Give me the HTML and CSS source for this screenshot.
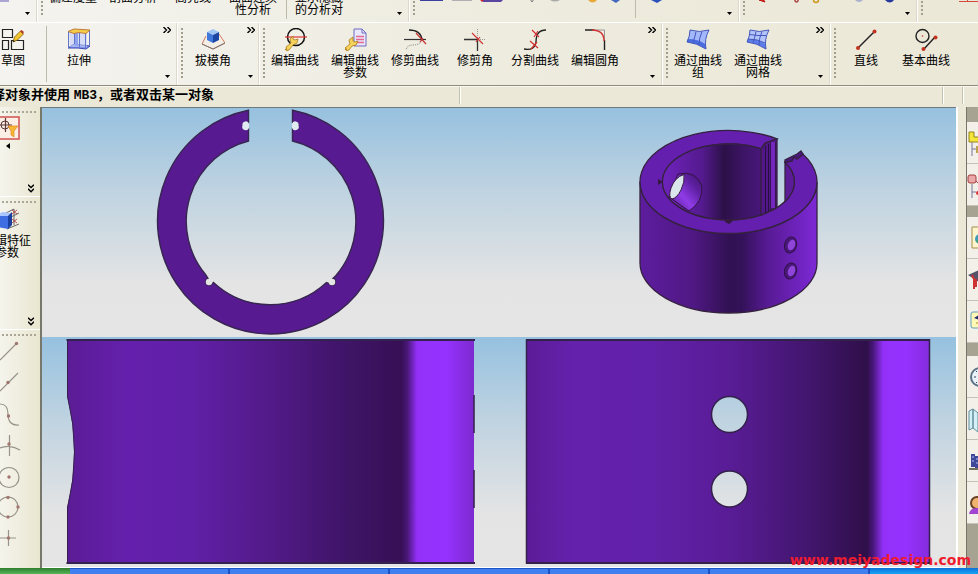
FILE: index.html
```html
<!DOCTYPE html>
<html lang="zh-CN">
<head>
<meta charset="utf-8">
<title>CAD</title>
<link rel="stylesheet" href="styles.css">
</head>
<body>
<svg class="defs" aria-hidden="true">
  <symbol id="more" viewBox="0 0 8 6"><path d="M.5 0 3.500 3 .5 6M4.500 0l3 3-3 3" fill="none" stroke="#000" stroke-width="1.400"/></symbol>
  <symbol id="down" viewBox="0 0 6 9"><path d="M0 .7 3 3.500 6 .7M0 4.700l3 3 3-3" fill="none" stroke="#000" stroke-width="1.500"/></symbol>
  <symbol id="caret" viewBox="0 0 5 3"><path d="M0 0h5L2.500 3z"/></symbol>
</svg>

<header class="toolbars">
  <div class="row row-top">
    <div class="group g-a first">
      <span class="stub"></span>
      <span class="end"><svg class="more"><use href="#more"/></svg><svg class="caret"><use href="#caret"/></svg></span>
    </div>
    <div class="group g-b">
      <i class="grip"></i>
      <button class="tool">偏差度量</button>
      <button class="tool">剖面分析</button>
      <button class="tool">高亮线</button>
      <button class="tool">曲面连续<br>性分析</button>
      <i class="sep"></i>
      <button class="tool">显示隐藏<br>的分析对</button>
      <span class="end"><svg class="more"><use href="#more"/></svg><svg class="caret"><use href="#caret"/></svg></span>
    </div>
    <div class="group g-c">
      <i class="grip"></i>
      <svg class="strip" width="300" height="22" viewBox="415 0 300 22">
        <path d="M420 0h23v1h-23z" fill="#3b3fa0"/><path d="M452 0h20v1h-20z" fill="#b0aeb0"/>
        <path d="M481 0h22l-2 2h-18z" fill="#5a45a0"/><circle cx="482" cy="0" r="1.500" fill="#c22"/>
        <path d="m530-1 2 3 2-3" fill="none" stroke="#777"/><path d="M550 0q5 3 10 0" fill="#aaa"/>
        <path d="M588 0q5 5 9 0" fill="#e9a93a"/><path d="m611 0 5 3 4-3" fill="#4467c0"/>
        <path d="M635.500 0v18" stroke="#bdbaa9"/><path d="m651 0 6 3 5-3" fill="#2a50bb"/>
      </svg>
      <span class="end"><svg class="more"><use href="#more"/></svg><svg class="caret"><use href="#caret"/></svg></span>
    </div>
    <div class="group g-d">
      <i class="grip"></i>
      <svg class="strip" width="150" height="22" viewBox="745 0 150 22">
        <path d="m759 0 4-1 2 3z" fill="#d22" stroke="#b11"/><path d="M795-1v2q2 2 3 0v-2" fill="none" stroke="#a44" stroke-width="1.500"/>
        <circle cx="816" cy="0" r="2.500" fill="none" stroke="#cc9a22" stroke-width="1.500"/><path d="M855 0q4 4 8 0" fill="#aab0d0"/>
        <path d="M885 0q5 5 9 0" fill="#26389c"/>
      </svg>
      <span class="end"><svg class="more"><use href="#more"/></svg><svg class="caret"><use href="#caret"/></svg></span>
    </div>
    <div class="group g-e">
      <i class="grip"></i>
      <svg class="strip" width="55" height="22" viewBox="923 0 55 22"><path d="M959 1.500h19M967.500-2v3" fill="none" stroke="#d24a3c"/></svg>
    </div>
  </div>

  <div class="row">
    <div class="group h-a first">
      <button class="tool cut">
        <svg class="icon" viewBox="0 0 24 24"><g fill="none" stroke="#222" stroke-width="1.200"><path d="M1.500 1.500h10v8h-10zM1.500 12.500h6v9h-6zM10.500 12.500v9h12v-9zM10.500 12.500h12"/></g><path d="m12 14 1.500-5 6-6 3 3-6 6z" fill="#f3c52c" stroke="#7a5a14" stroke-width=".8"/><path d="m19 3 1.500-1 2.500 2-1.500 2z" fill="#b53a2a"/><path d="m12 14 .6-2 1.400 1.300z" fill="#111"/></svg>
        草图</button>
      <i class="sep"></i>
      <button class="tool">
        <svg class="icon" viewBox="0 0 24 24"><path d="M1 20 7 16l16 2-4 3-8-1z" fill="#8296ee" stroke="#3947b3"/><path d="M2 3h18v16H3z" fill="#c3cefa" opacity=".6"/><path d="M8 4h3v14H8z" fill="#8fa3ee"/><path d="M1.500 4v16M7.500 5v11M12.500 5v14M22.500 3v15M18.500 5v16" fill="none" stroke="#6275c8"/><path d="M1 3.500 7 1l16 1-4 3.500-7-1-5 1z" fill="#f5ce49" stroke="#c17b38"/></svg>
        拉伸</button>
      <span class="end"><svg class="more"><use href="#more"/></svg><svg class="caret"><use href="#caret"/></svg></span>
    </div>
    <div class="group h-b">
      <i class="grip"></i>
      <button class="tool">
        <svg class="icon" viewBox="0 0 24 24"><path d="M5 8 1 16l11 5 12-6-6-9" fill="#f3efe6" stroke="#d0765c"/><path d="m1 16 11 5 12-6" fill="none" stroke="#777"/><path d="m6 4 6-3 6 3-6 3z" fill="#9fc6f4"/><path d="m6 4 6 3v8l-6-3z" fill="#3f78da"/><path d="m18 4-6 3v8l6-3z" fill="#1d45a4"/></svg>
        拔模角</button>
      <span class="end"><svg class="more"><use href="#more"/></svg><svg class="caret"><use href="#caret"/></svg></span>
    </div>
    <div class="group h-c">
      <i class="grip"></i>
      <button class="tool">
        <svg class="icon" viewBox="0 0 24 24"><circle cx="13" cy="9" r="8.500" fill="none" stroke="#111" stroke-width="1.500"/><path d="M2 9h22" stroke="#d33" stroke-width="1.200"/><path d="m3 19 5-4-1-4 3-3v3l2 1 3-1-1 4-4 2-4 5q-3 2-4-1l2 .5z" fill="#f6d35c" stroke="#a97a1a" stroke-width=".8"/></svg>
        编辑曲线</button>
      <button class="tool">
        <svg class="icon" viewBox="0 0 24 24"><path d="M11 1h8l4 4v13H11z" fill="#e9e8ff" stroke="#6e6cc0"/><path d="M19 1v4h4" fill="none" stroke="#6e6cc0"/><path d="M13 8.500h8M13 11.500h8M13 14.500h8" stroke="#e46a8e" stroke-width="1.500"/><path d="m2 20 5-4-1-4 4-3v4l2 1 3-1-2 4-4 1-3 4q-3 2-4-1l2 .5z" fill="#f6d35c" stroke="#a97a1a" stroke-width=".8"/></svg>
        编辑曲线<br>参数</button>
      <button class="tool">
        <svg class="icon" viewBox="0 0 24 24"><path d="M6 2q12 0 13 10" fill="none" stroke="#222" stroke-width="1.400"/><path d="M19 12q-2 5-9 5-6 0-7 5" fill="none" stroke="#777" stroke-dasharray="1 1"/><path d="M1 11.500h22" stroke="#333" stroke-width="1.200"/><path d="m13 5 10 11M20 10l-3 4" stroke="#c93434" stroke-width="1.200"/></svg>
        修剪曲线</button>
      <button class="tool">
        <svg class="icon" viewBox="0 0 24 24"><path d="M1 11.500h14M14.500 11v12" stroke="#333" stroke-width="1.300"/><path d="M14.500 1v10M15 11.500h8" stroke="#999" stroke-dasharray="1 1"/><path d="m9 5 11 11M17 9l-4 5" stroke="#d03838" stroke-width="1.200"/></svg>
        修剪角</button>
      <button class="tool">
        <svg class="icon" viewBox="0 0 24 24"><path d="M1 21q11 2 12-7 0-12 10-12" fill="none" stroke="#222" stroke-width="1.300"/><path d="m9 2 7 7M15 3l-4 6M7 13l8 7M14 14l-6 7" stroke="#d13232" stroke-width="1.200"/></svg>
        分割曲线</button>
      <button class="tool">
        <svg class="icon" viewBox="0 0 24 24"><path d="M2 2h9M21.500 12v10" stroke="#222" stroke-width="1.400"/><path d="M11 2h10.500v10" fill="none" stroke="#999"/><path d="M9 2q12 0 12 11" fill="none" stroke="#d23636" stroke-width="1.400"/></svg>
        编辑圆角</button>
      <span class="end"><svg class="more"><use href="#more"/></svg><svg class="caret"><use href="#caret"/></svg></span>
    </div>
    <div class="group h-d">
      <i class="grip"></i>
      <button class="tool">
        <svg class="icon" viewBox="0 0 24 24"><path d="M4 2Q13 5 23 2 18 11 20 21 11 15 1 14 4 8 4 2Z" fill="#a3b8fa"/><path d="M2 11Q12 11 19 16L20 21Q11 15 1 14Z" fill="#496ce0"/><path d="M4 2Q13 5 23 2 18 11 20 21 11 15 1 14 4 8 4 2ZM10 3.500Q9 9 7 14.500M16 3.500Q13 10 13 17" fill="none" stroke="#4458bc"/></svg>
        通过曲线<br>组</button>
      <button class="tool">
        <svg class="icon" viewBox="0 0 24 24"><path d="M4 2Q13 5 23 2 18 11 20 21 11 15 1 14 4 8 4 2Z" fill="#b3c4fb"/><path d="M2 11Q12 11 19 16L20 21Q11 15 1 14Z" fill="#5c7cea"/><path d="M4 2Q13 5 23 2 18 11 20 21 11 15 1 14 4 8 4 2ZM10 3.500Q9 9 7 14.500M16 3.500Q13 10 13 17M3.500 6.500Q12 8 20 7.500M2 11Q12 11 19 15" fill="none" stroke="#4458bc"/></svg>
        通过曲线<br>网格</button>
      <span class="end"><svg class="more"><use href="#more"/></svg><svg class="caret"><use href="#caret"/></svg></span>
    </div>
    <div class="group h-e">
      <i class="grip"></i>
      <button class="tool">
        <svg class="icon" viewBox="0 0 24 24"><path d="M4 20 20 4" stroke="#222" stroke-width="1.400"/><circle cx="4" cy="20" r="2" fill="#c2321e"/><circle cx="20.500" cy="3.500" r="2" fill="#c2321e"/></svg>
        直线</button>
      <button class="tool">
        <svg class="icon" viewBox="0 0 24 24"><circle cx="8.500" cy="8" r="6.500" fill="none" stroke="#222" stroke-width="1.400"/><circle cx="8.500" cy="8" r=".8" fill="#c33"/><path d="m10 21 11-12" stroke="#222" stroke-width="1.400"/><circle cx="9.500" cy="21" r="2" fill="#c2321e"/><circle cx="21.500" cy="9.500" r="2" fill="#c2321e"/></svg>
        基本曲线</button>
    </div>
  </div>
</header>

<div class="status"><p>择对象并使用 <b>MB3</b>，或者双击某一对象</p><span class="cell c1"></span><span class="cell c2"></span><span class="cell c3"></span></div>

<main class="work">
  <aside class="side">
    <section class="panel p1">
      <i class="hgrip"></i>
      <svg width="24" height="44" viewBox="0 0 24 44"><rect x="-3" y="2" width="22" height="22" fill="#fbeee4" stroke="#d05252" stroke-width="1.500"/><circle cx="5" cy="10" r="4" fill="none" stroke="#5c3434"/><path d="M-1 10h13M5.500 3v14" stroke="#5c3434" stroke-width="1.200"/><path d="M8 11h10l-4 5v6l-3-2v-4z" fill="#f8b632" stroke="#e08a28" stroke-width=".7"/><path d="m6 31 4-3v6z"/></svg>
      <svg class="down"><use href="#down"/></svg>
    </section>
    <section class="panel p2">
      <i class="hgrip"></i>
      <button class="tool side-tool">
        <svg class="icon" viewBox="0 0 24 24"><path d="m7 8 12-6M12 12l12-6M12 22l12-5M19 2v16" fill="none" stroke="#666"/><path d="m17 3 5 4M22 3l-5 4M17 12l5 4M22 12l-5 4" stroke="#a33" stroke-width=".8"/><path d="m2 9 5-4 10 1-4 4z" fill="#a8c8ff"/><path d="M2 9h11v13L2 20z" fill="#3e6ee2"/><path d="m13 9 4-4v13l-4 4z" fill="#1b3f9e"/></svg>
        编辑特征<br>参数</button>
      <svg class="down"><use href="#down"/></svg>
    </section>
    <section class="panel p3">
      <i class="hgrip"></i>
      <svg width="22" height="214" viewBox="0 338 22 214" fill="none" stroke="#97938a" stroke-width="1.200"><path d="m0 360 16-16M0 391l18-18M0 404q8 0 8 10 0 12 11 11M0 448q10-4 20 2M9.500 435v21M0 538h16M8.500 530v16"/><circle cx="9" cy="477.500" r="10"/><circle cx="8" cy="507" r="10"/><g fill="#a0766e" stroke="none"><circle cx="16.500" cy="343.500" r="1.700"/><circle cx="8" cy="382.500" r="1.700"/><circle cx="8.500" cy="416" r="1.700"/><circle cx="9" cy="444" r="1.700"/><circle cx="9" cy="477" r="1.700"/><circle cx="8" cy="497.500" r="1.700"/><circle cx="18" cy="507" r="1.700"/><circle cx="8" cy="517" r="1.700"/><circle cx="8.500" cy="538" r="1.700"/></g></svg>
    </section>
  </aside>

  <div class="views">
    <svg class="view" viewBox="42 108 457 229" preserveAspectRatio="xMidYMid meet">
      <path d="M248.500 110.200A113 113 0 1 0 292.500 110.200V122.500H295A3 3 0 1 1 295 128.500H292.500V141A83 83 0 0 1 336 275.500L333 278.500A3.500 3.500 0 1 1 329 283.500L326.500 282.500A83 83 0 0 1 213.500 282.500L212 284A3.500 3.500 0 1 1 208 278.500L205.500 274.500A83 83 0 0 1 248.500 141V128.500H247A3 3 0 1 1 247 122.500H248.500Z" fill="#571a90" stroke="#372650" stroke-width="1.400"/>
      <path d="M242.500 125.500a3 3 0 0 1 6.500-1.500v4a3 3 0 0 1-6.500-2.500M298.500 125.500a3 3 0 0 0-6.500-1.500v4a3 3 0 0 0 6.500-2.500" fill="#dfeaf1"/>
      <circle cx="209" cy="282" r="3.200" fill="#e4e4e4"/><circle cx="332" cy="282" r="3.200" fill="#e4e4e4"/>
    </svg>
    <svg class="view" viewBox="499 108 457 229" preserveAspectRatio="xMidYMid meet">
      <defs>
        <linearGradient id="outer"><stop offset="0" stop-color="#5d1d9e"/><stop offset=".3" stop-color="#501884"/><stop offset=".51" stop-color="#301151"/><stop offset=".58" stop-color="#34125a"/><stop offset=".72" stop-color="#571a94"/><stop offset="1" stop-color="#7d29d6"/></linearGradient>
        <linearGradient id="inner"><stop offset="0" stop-color="#6f23bd"/><stop offset=".4" stop-color="#541a8e"/><stop offset=".62" stop-color="#2c1047"/><stop offset=".8" stop-color="#3c1464"/><stop offset="1" stop-color="#48177b"/></linearGradient>
        <linearGradient id="bore" x1="0" y1="1" x2="1" y2="0"><stop offset="0" stop-color="#48177b"/><stop offset=".4" stop-color="#8f3ce8"/><stop offset=".7" stop-color="#5f20a2"/><stop offset="1" stop-color="#3e1468"/></linearGradient>
      </defs>
      <g stroke="#35213f" stroke-width="1.300">
        <path d="M640 182v81a88.500 50 0 0 0 177 0v-81A88.500 51.500 0 0 1 640 182Z" fill="url(#outer)"/>
        <path d="M777 138.900A88.500 51.500 0 1 0 803 154.200L797 159 794 157 792 161 785 162.400A66 38 0 1 1 761 148.900L765 143Z" fill="#651fae"/>
        <path d="M761 148.900A66 38 0 1 0 762 214.700V149Z" fill="url(#inner)"/>
        <path d="M785 162.400A66 38 0 0 1 785 201.600Z" fill="#5c1c98"/>
        <path d="M761 148.900 766 143 777 139v67.500q-7 5-16 8.500Z" fill="#511788"/>
        <path d="M803 154.200 797 159 794 157 792 161 785 162.400V160l12-6 4-3Z" fill="#4b187e"/>
      </g>
      <path d="M765.500 146v67M768.500 144v67" stroke="#26103f"/><path d="M773 142v66" stroke="#7426bd" stroke-width="4"/><path d="M770.500 142v68M775.500 142v65" stroke="#35154f"/>
      <path d="M678 174q18-4 24 12 1 16-13 25l-20-14Z" fill="url(#bore)" stroke="#321340"/>
      <path d="M684 174.500Q675 177 671 188q-3 9 1 11 5-1 9-9 4-8 3-15.500Z" fill="#dbe5ec" stroke="#351845"/>
      <path d="m658 179 5 3-5 3zM725 219h7v3l-3 2-4-2z" fill="#351940"/>
      <g fill="#4a187b" stroke="#311244"><ellipse cx="790.500" cy="245" rx="6" ry="8" transform="rotate(16 790.500 245)"/><ellipse cx="790.500" cy="271" rx="6" ry="8" transform="rotate(16 790.500 271)"/></g>
      <g fill="#8f45d8"><ellipse cx="791.500" cy="245" rx="3.500" ry="5.500" transform="rotate(20 791.500 245)"/><ellipse cx="791.500" cy="271" rx="3.500" ry="5.500" transform="rotate(20 791.500 271)"/></g>
    </svg>
    <svg class="view" viewBox="42 337 457 230" preserveAspectRatio="xMidYMid meet">
      <defs><linearGradient id="side"><stop offset="0" stop-color="#5b1c96"/><stop offset=".15" stop-color="#6420ac"/><stop offset=".3" stop-color="#6120a8"/><stop offset=".5" stop-color="#521a88"/><stop offset=".7" stop-color="#3e1465"/><stop offset=".82" stop-color="#360f55"/><stop offset=".835" stop-color="#461672"/><stop offset=".86" stop-color="#9330f8"/><stop offset=".93" stop-color="#9632ff"/><stop offset="1" stop-color="#7d2ad0"/></linearGradient></defs>
      <path d="M67 340h407v223H67V508Q81 452 67 396Z" fill="url(#side)"/>
      <path d="M66.500 340H475M66.500 563H475" stroke="#33214f" stroke-width="2"/>
      <path d="M67.500 340v56q14 56 0 112v55" fill="none" stroke="#35204c"/>
      <path d="M474 395v38M474 470v38" stroke="#34204c" stroke-width="1.500"/>
    </svg>
    <svg class="view" viewBox="499 337 457 230" preserveAspectRatio="xMidYMid meet">
      <defs><linearGradient id="front"><stop offset="0" stop-color="#5c1c98"/><stop offset=".12" stop-color="#6421ac"/><stop offset=".3" stop-color="#6221aa"/><stop offset=".5" stop-color="#591c96"/><stop offset=".7" stop-color="#42166e"/><stop offset=".845" stop-color="#2f0f49"/><stop offset=".86" stop-color="#48177b"/><stop offset=".885" stop-color="#9330f8"/><stop offset=".94" stop-color="#9632ff"/><stop offset="1" stop-color="#842cdd"/></linearGradient></defs>
      <path fill-rule="evenodd" d="M526.500 340H929.500V563H526.500ZM711.500 414.500a18 18 0 1 0 36 0 18 18 0 1 0-36 0ZM711.500 489a18 18 0 1 0 36 0 18 18 0 1 0-36 0Z" fill="url(#front)" stroke="#33214b" stroke-width="1.500"/>
      <path d="M526 340H930M526 563H930" stroke="#33214b" stroke-width="2"/>
    </svg>
  </div>

  <nav class="tabs">
    <i class="bar b1"></i>
    <button class="tab"><svg viewBox="0 0 12 42"><path d="M2 10h5v5h5v5H2z" fill="#f4e53a" stroke="#93831b"/><path d="M5 20v14M5 27h4" stroke="#77769a"/><path d="M9 24h4v7H9z" fill="#bca34d"/></svg></button>
    <button class="tab"><svg viewBox="0 0 12 42"><rect x="1" y="11" width="8" height="8" rx="2" fill="#eaa8a8" stroke="#a23e3e"/><path d="M5 20v14M5 28h4" stroke="#77769a"/><circle cx="11" cy="29" r="2" fill="#d33"/><path d="m9 17 3 3" stroke="#a33"/></svg></button>
    <i class="bar b2"></i>
    <button class="tab"><svg viewBox="0 0 12 42"><path d="M5 10h9v21H5z" fill="#fdf6cc" stroke="#a18d48"/><circle cx="13" cy="22" r="5" fill="#3d9db7"/><path d="m9 24 3 2v-4z" fill="#49a64a"/></svg></button>
    <button class="tab"><svg viewBox="0 0 12 42"><path d="m1 16 11-5v12l-5-3z" fill="#555369"/><path d="m5 16 2 4v10M9 20v8" fill="none" stroke="#cf3232" stroke-width="2"/></svg></button>
    <button class="tab"><svg viewBox="0 0 12 42"><rect x="4" y="11" width="12" height="16" rx="2" fill="#fff9b5" stroke="#5c9fba"/><path d="m7 17 5-3v5z" fill="#222f73"/><path d="M9 22h3" stroke="#9c8a2d"/></svg></button>
    <i class="bar b3"></i>
    <button class="tab"><svg viewBox="0 0 12 42"><circle cx="13" cy="21" r="9" fill="#e8f2f8" stroke="#5c7486" stroke-width="2"/><path d="M7 21h2M9 15l1 1M9 27l1-1M12 16v5" stroke="#345"/></svg></button>
    <button class="tab"><svg viewBox="0 0 12 42"><path d="m2 13 4-2v19l-4 2zM6 11l5 4v19l-5-4z" fill="#d3f0f6" stroke="#638d9c"/></svg></button>
    <button class="tab"><svg viewBox="0 0 12 42"><path d="M4 14h4v13H4zM8 16h5v12H8z" fill="#3d489b"/><path d="M2 29h10" stroke="#72715a" stroke-width="2"/><path d="M5 17h2M9 19h3M5 21h2M9 23h3" stroke="#b9c0ef"/></svg></button>
    <button class="tab"><svg viewBox="0 0 12 42"><circle cx="10" cy="21" r="6" fill="#f0b36d" stroke="#6b4126" stroke-width="2"/><path d="M2 32q1-7 10-6v6z" fill="#a144d2"/></svg></button>
  </nav>
  <span class="mark">www.meiyadesign.com</span>
</main>
<footer class="taskbar"><i class="start"></i><i class="tasks"></i><i class="tray"></i></footer>
</body>
</html>
```

FILE: styles.css
```css
* { box-sizing: border-box; }
body {
  margin: 0;
  height: 100vh;
  display: flex;
  flex-direction: column;
  overflow: hidden;
  background: #ece9d8;
  color: #000;
  font-family: "Liberation Sans", "Noto Sans CJK SC", sans-serif;
  font-size: 12px;
  line-height: 12px;
}
button { border: 0; background: none; padding: 0; margin: 0; font: inherit; color: inherit; }
i { display: block; flex: none; }
svg { display: block; flex: none; }
.defs { position: absolute; width: 0; height: 0; }

/* Toolbars */
.toolbars { flex: none; background: linear-gradient(90deg, #f4f3ef, #eeecdf 50%, #ebe8d7); border-bottom: 1px solid #8f8c7c; }
.row { display: flex; height: 63px; border-top: 1px solid #fff; overflow: hidden; }
.row-top { height: 22px; align-items: flex-end; border-top: 0; }
.group { flex: none; display: flex; height: 62px; border-left: 1px solid #fff; border-right: 1px solid #dcd9ca; }
.first { border-left: 0; }
.g-a { width: 37px; }
.g-b { width: 372px; }
.g-c { width: 330px; }
.g-d { width: 178px; }
.g-e, .h-e { flex: 1 0 0; border-right: 0; }
.h-a { width: 177px; }
.h-b { width: 82px; }
.h-c { width: 403px; }
.h-d { width: 168px; }
.grip {
  width: 2px;
  height: 52px;
  margin: 5px 0 5px 3px;
  background: repeating-linear-gradient(#a19e90 0 2px, transparent 2px 4px);
}
.sep { width: 1px; margin: 3px 2px 3px 3px; background: #bdbaa9; }
.tool {
  flex: none;
  align-self: flex-start;
  width: 60px;
  padding-top: 32px;
  display: block;
  position: relative;
  text-align: center;
  white-space: nowrap;
}
.icon { position: absolute; left: 18px; top: 5px; width: 24px; height: 24px; overflow: hidden; }
.cut { margin-left: -17px; }
.end {
  margin-left: auto;
  width: 18px;
  padding: 4px 0 7px;
  display: flex;
  flex-direction: column;
  align-items: center;
  justify-content: space-between;
}
.more { width: 8px; height: 6px; }
.caret { width: 5px; height: 3px; }
.strip { align-self: flex-end; }
.stub { width: 9px; height: 2px; margin-top: 40px; background: #aaa5d2; }

/* Prompt line */
.status {
  flex: none;
  height: 21px;
  display: flex;
  overflow: hidden;
  background: #ebe8d8;
  border-top: 1px solid #f8f7f0;
}
.status p { flex: 1; margin: 0 0 0 -8px; font-size: 13px; line-height: 15px; font-weight: bold; white-space: nowrap; }
.status b { font-family: "Liberation Mono", monospace; }
.cell { flex: none; border-left: 1px solid #c4c1b0; box-shadow: inset 1px 0 #fff; margin-bottom: 3px; }
.c1 { width: 483px; }
.c2 { width: 20px; }
.c3 { width: 16px; }

/* Work area */
.work { flex: 1; min-height: 0; display: flex; position: relative; }
.side {
  width: 42px;
  flex: none;
  overflow: hidden;
  background: linear-gradient(90deg, #f5f4ec, #e9e6d0);
  border-right: 2px solid #77776c;
}
.panel { position: relative; border-bottom: 1px solid #fff; overflow: hidden; padding-top: 4px; }
.p1 { height: 90px; }
.p2 { height: 133px; }
.p3 { height: 238px; border-bottom: 0; }
.hgrip { width: 34px; height: 2px; margin-left: 2px; margin-bottom: 2px; background: repeating-linear-gradient(90deg, #aaa799 0 2px, transparent 2px 4px); }
.side-tool { margin-left: -23px; padding-top: 30px; }
.side-tool .icon { top: 2px; }
.down { position: absolute; right: 6px; bottom: 3px; width: 6px; height: 9px; }
.views {
  flex: 1;
  min-width: 0;
  display: grid;
  grid-template: 229fr 230fr / 1fr 1fr;
  border-top: 1px solid #6d7a80;
  border-bottom: 1px solid #fff;
}
.view { width: 100%; height: 100%; min-height: 0; background: linear-gradient(#96c1df, #bfd3e1 36%, #e4e4e4 77%, #e5e5e5); }
.tabs {
  flex: none;
  width: 22px;
  display: flex;
  flex-direction: column;
  padding-top: 2px;
  background: linear-gradient(90deg, #fff 2px, #ece8d8 2px 10px, #77746a 10px 11px, #a7a393 11px);
}
.bar { margin-left: 11px; }
.b1 { height: 13px; }
.b2 { height: 11px; }
.b3 { height: 13px; }
.tab { flex: none; height: 42px; margin-left: 11px; background: #f2f0e9; border-bottom: 1px solid #c6c3b6; overflow: hidden; }
.tab svg { width: 12px; height: 42px; }
.mark {
  position: absolute;
  right: 7px;
  bottom: 0;
  color: #ee1c2e;
  font: bold 14px/16px "DejaVu Sans", sans-serif;
}

/* Task bar */
.taskbar { flex: none; display: flex; height: 6px; }
.start { width: 70px; background: linear-gradient(#2f7d2f, #55b655); }
.tasks { flex: 1; background: repeating-linear-gradient(90deg, #3f7ff0 0 158px, #1c4fc0 158px 160px); border-top: 1px solid #1d55c8; }
.tray { width: 108px; background: linear-gradient(#0d6fd8, #14a5f5); }
```
